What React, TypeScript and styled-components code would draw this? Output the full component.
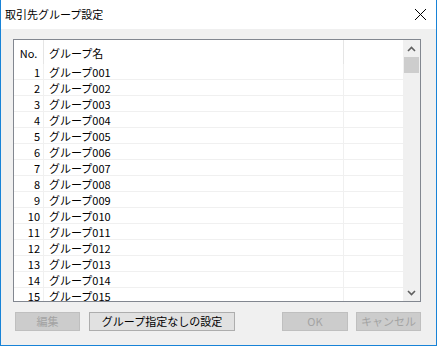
import styled, { createGlobalStyle } from "styled-components";

const FONT = `"Noto Sans CJK JP", "Noto Sans", sans-serif`;

const GlobalStyle = createGlobalStyle`
  html, body {
    margin: 0;
    padding: 0;
    background: #ffffff;
  }
  body {
    font-family: ${FONT};
    font-size: 11px;
    color: #000000;
  }
`;

const Window = styled.div`
  width: 437px;
  height: 346px;
  box-sizing: border-box;
  border: 1px solid #1883d7;
  border-top: none;
  display: flex;
  flex-direction: column;
  background: #f0f0f0;
  overflow: hidden;
`;

const TitleBar = styled.div`
  height: 29px;
  flex: none;
  background: #ffffff;
  display: flex;
  align-items: center;
  justify-content: space-between;
  padding: 0 9px 0 4px;
`;

const Title = styled.div`
  font-family: ${FONT};
  font-size: 11px;
  color: #000000;
  margin-top: -1px;
`;

const CloseIcon = styled.svg`
  width: 13px;
  height: 13px;
  margin-top: -1px;
`;

const Body = styled.div`
  flex: 1;
  display: flex;
  flex-direction: column;
  padding: 10px 14px 0 12px;
`;

const ListBox = styled.div`
  width: 408px;
  height: 263px;
  box-sizing: border-box;
  border: 1px solid #828790;
  background: #ffffff;
  display: flex;
`;

const Table = styled.div`
  width: 389px;
  overflow: hidden;
`;

const Row = styled.div<{ $header?: boolean }>`
  display: grid;
  grid-template-columns: 30px 300px 59px;
  height: ${({ $header }) => ($header ? "24px" : "16px")};
  box-sizing: border-box;
  border-bottom: ${({ $header }) => ($header ? "none" : "1px solid #f0f0f0")};
`;

const Cell = styled.div<{ $align?: "left" | "right" | "center"; $header?: boolean }>`
  box-sizing: border-box;
  border-right: 1px solid ${({ $header }) => ($header ? "#e5e5e5" : "#f0f0f0")};
  display: flex;
  align-items: center;
  justify-content: ${({ $align }) =>
    $align === "right" ? "flex-end" : $align === "center" ? "center" : "flex-start"};
  padding: ${({ $align }) => ($align === "right" ? "1px 3px 0 0" : $align === "center" ? "1px 0 0 0" : "1px 0 0 5px")};
  font-family: ${FONT};
  font-size: 11px;
  line-height: 14px;
  white-space: nowrap;
  &:last-child {
    border-right: none;
  }
`;

const ScrollBar = styled.div`
  width: 17px;
  background: #f0f0f0;
  display: flex;
  flex-direction: column;
`;

const ArrowButton = styled.div`
  height: 17px;
  display: flex;
  align-items: center;
  justify-content: center;
`;

const Track = styled.div`
  flex: 1;
`;

const Thumb = styled.div`
  width: 15px;
  height: 16px;
  margin: 0 auto;
  background: #cdcdcd;
`;

const ButtonRow = styled.div`
  display: flex;
  align-items: center;
  margin-top: 10px;
  padding: 0 1px 0 2px;
`;

const Group = styled.div<{ $gap: number }>`
  display: flex;
  gap: ${({ $gap }) => $gap}px;
`;

const Spacer = styled.div`
  flex: 1;
`;

const Button = styled.button<{ $width: number; $disabled?: boolean }>`
  width: ${({ $width }) => $width}px;
  height: 19px;
  box-sizing: border-box;
  margin: 0;
  padding: 0;
  border: 1px solid ${({ $disabled }) => ($disabled ? "#bfbfbf" : "#adadad")};
  background: ${({ $disabled }) => ($disabled ? "#cccccc" : "#e1e1e1")};
  color: ${({ $disabled }) => ($disabled ? "#a3a3a3" : "#000000")};
  font-family: ${FONT};
  font-size: 11px;
  line-height: 17px;
`;

const groups = Array.from({ length: 15 }, (_, i) => ({
  no: i + 1,
  name: `グループ${String(i + 1).padStart(3, "0")}`,
}));

function Chevron({ up }: { up?: boolean }) {
  return (
    <svg width="9" height="6" viewBox="0 0 9 6">
      <path
        d={up ? "M1 5 L4.5 1.5 L8 5" : "M1 1 L4.5 4.5 L8 1"}
        fill="none"
        stroke="#606060"
        strokeWidth="1.6"
      />
    </svg>
  );
}

export default function App(): JSX.Element {
  return (
    <>
      <GlobalStyle />
      <Window>
        <TitleBar>
          <Title>取引先グループ設定</Title>
          <CloseIcon viewBox="0 0 13 13">
            <path d="M1 1 L12 12 M12 1 L1 12" stroke="#000" strokeWidth="1" fill="none" />
          </CloseIcon>
        </TitleBar>
        <Body>
          <ListBox>
            <Table>
              <Row $header>
                <Cell $header $align="center">No.</Cell>
                <Cell $header>グループ名</Cell>
                <Cell $header />
              </Row>
              {groups.map((g) => (
                <Row key={g.no}>
                  <Cell $align="right">{g.no}</Cell>
                  <Cell>{g.name}</Cell>
                  <Cell />
                </Row>
              ))}
            </Table>
            <ScrollBar>
              <ArrowButton>
                <Chevron up />
              </ArrowButton>
              <Track>
                <Thumb />
              </Track>
              <ArrowButton>
                <Chevron />
              </ArrowButton>
            </ScrollBar>
          </ListBox>
          <ButtonRow>
            <Group $gap={9}>
              <Button $width={65} $disabled>
                編集
              </Button>
              <Button $width={146}>グループ指定なしの設定</Button>
            </Group>
            <Spacer />
            <Group $gap={8}>
              <Button $width={66} $disabled>
                OK
              </Button>
              <Button $width={65} $disabled>
                キャンセル
              </Button>
            </Group>
          </ButtonRow>
        </Body>
      </Window>
    </>
  );
}
